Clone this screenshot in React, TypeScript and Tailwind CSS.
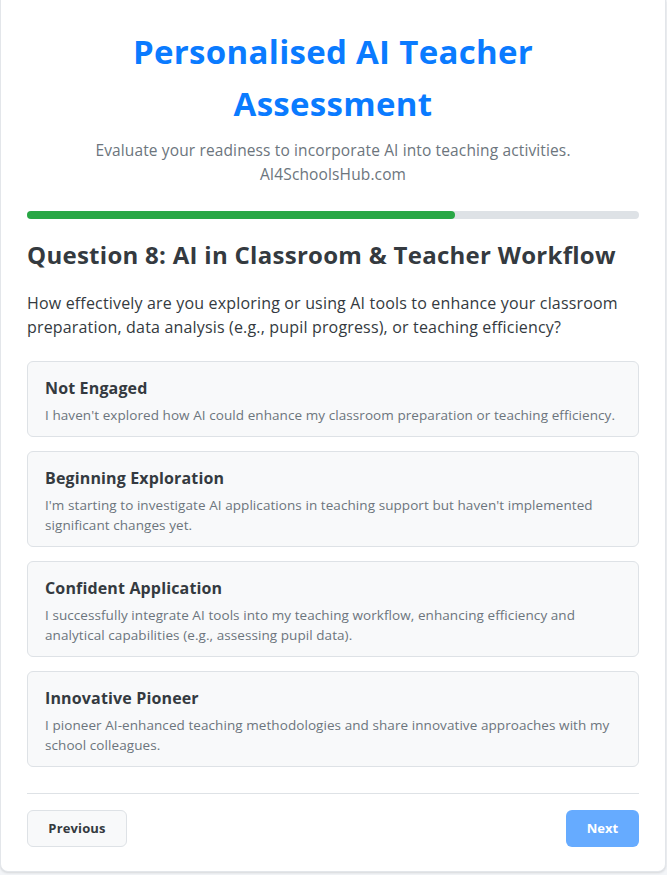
import React from "react"

const options = [
  {
    title: "Not Engaged",
    desc: "I haven't explored how AI could enhance my classroom preparation or teaching efficiency.",
  },
  {
    title: "Beginning Exploration",
    desc: "I'm starting to investigate AI applications in teaching support but haven't implemented significant changes yet.",
  },
  {
    title: "Confident Application",
    desc: "I successfully integrate AI tools into my teaching workflow, enhancing efficiency and analytical capabilities (e.g., assessing pupil data).",
  },
  {
    title: "Innovative Pioneer",
    desc: "I pioneer AI-enhanced teaching methodologies and share innovative approaches with my school colleagues.",
  },
]

export default function App() {
  return (
    <div
      className="min-h-screen bg-[#f3f5f8] pb-[3px]"
      style={{ fontFamily: '"Open Sans", "DejaVu Sans", sans-serif' }}
    >
      <div className="w-[666px] bg-white border-x border-b border-[#e3e6ea] rounded-b-lg shadow-sm px-[26px] pt-[26px] pb-[24px]">
        <h1 className="text-center text-[33px] leading-[52px] font-bold tracking-[0.3px] text-[#0a7bff] px-[60px]">
          Personalised AI Teacher Assessment
        </h1>
        <p className="mt-[8px] text-center text-[15.5px] leading-[24px] tracking-[0.13px] text-[#6c757d]">
          Evaluate your readiness to incorporate AI into teaching activities.
          <br />
          AI4SchoolsHub.com
        </p>

        <div className="mt-[25px] h-[8px] w-full rounded-full bg-[#dee2e6]">
          <div className="h-full w-[70%] rounded-full bg-[#28a745]" />
        </div>

        <h2 className="mt-[20px] text-[24px] leading-[32px] font-bold tracking-[0.28px] text-[#343a40]">
          Question 8: AI in Classroom &amp; Teacher Workflow
        </h2>
        <p className="mt-[20px] text-[16px] leading-[24px] tracking-[0.17px] text-[#343a40]">
          How effectively are you exploring or using AI tools to enhance your classroom
          preparation, data analysis (e.g., pupil progress), or teaching efficiency?
        </p>

        <div className="mt-[22px] flex flex-col gap-[14px]">
          {options.map((o) => (
            <div
              key={o.title}
              className="rounded-md border border-[#dee2e6] bg-[#f8f9fa] px-[17px] pt-[16px] pb-[11px]"
            >
              <div className="text-[16px] leading-[20px] font-bold tracking-[0.15px] text-[#343a40]">{o.title}</div>
              <div className="mt-[7px] text-[13.5px] leading-[20px] tracking-[0.07px] text-[#6c757d]">{o.desc}</div>
            </div>
          ))}
        </div>

        <div className="mt-[26px] border-t border-[#dee2e6]" />

        <div className="mt-[16px] flex justify-between">
          <button className="h-[37px] w-[100px] rounded-md border border-[#dee2e6] bg-[#f8f9fa] text-[13px] font-bold tracking-[0.15px] text-[#343a40]">
            Previous
          </button>
          <button className="h-[37px] w-[73px] rounded-md bg-[#66abff] text-[13px] font-bold text-white">
            Next
          </button>
        </div>
      </div>
    </div>
  )
}
